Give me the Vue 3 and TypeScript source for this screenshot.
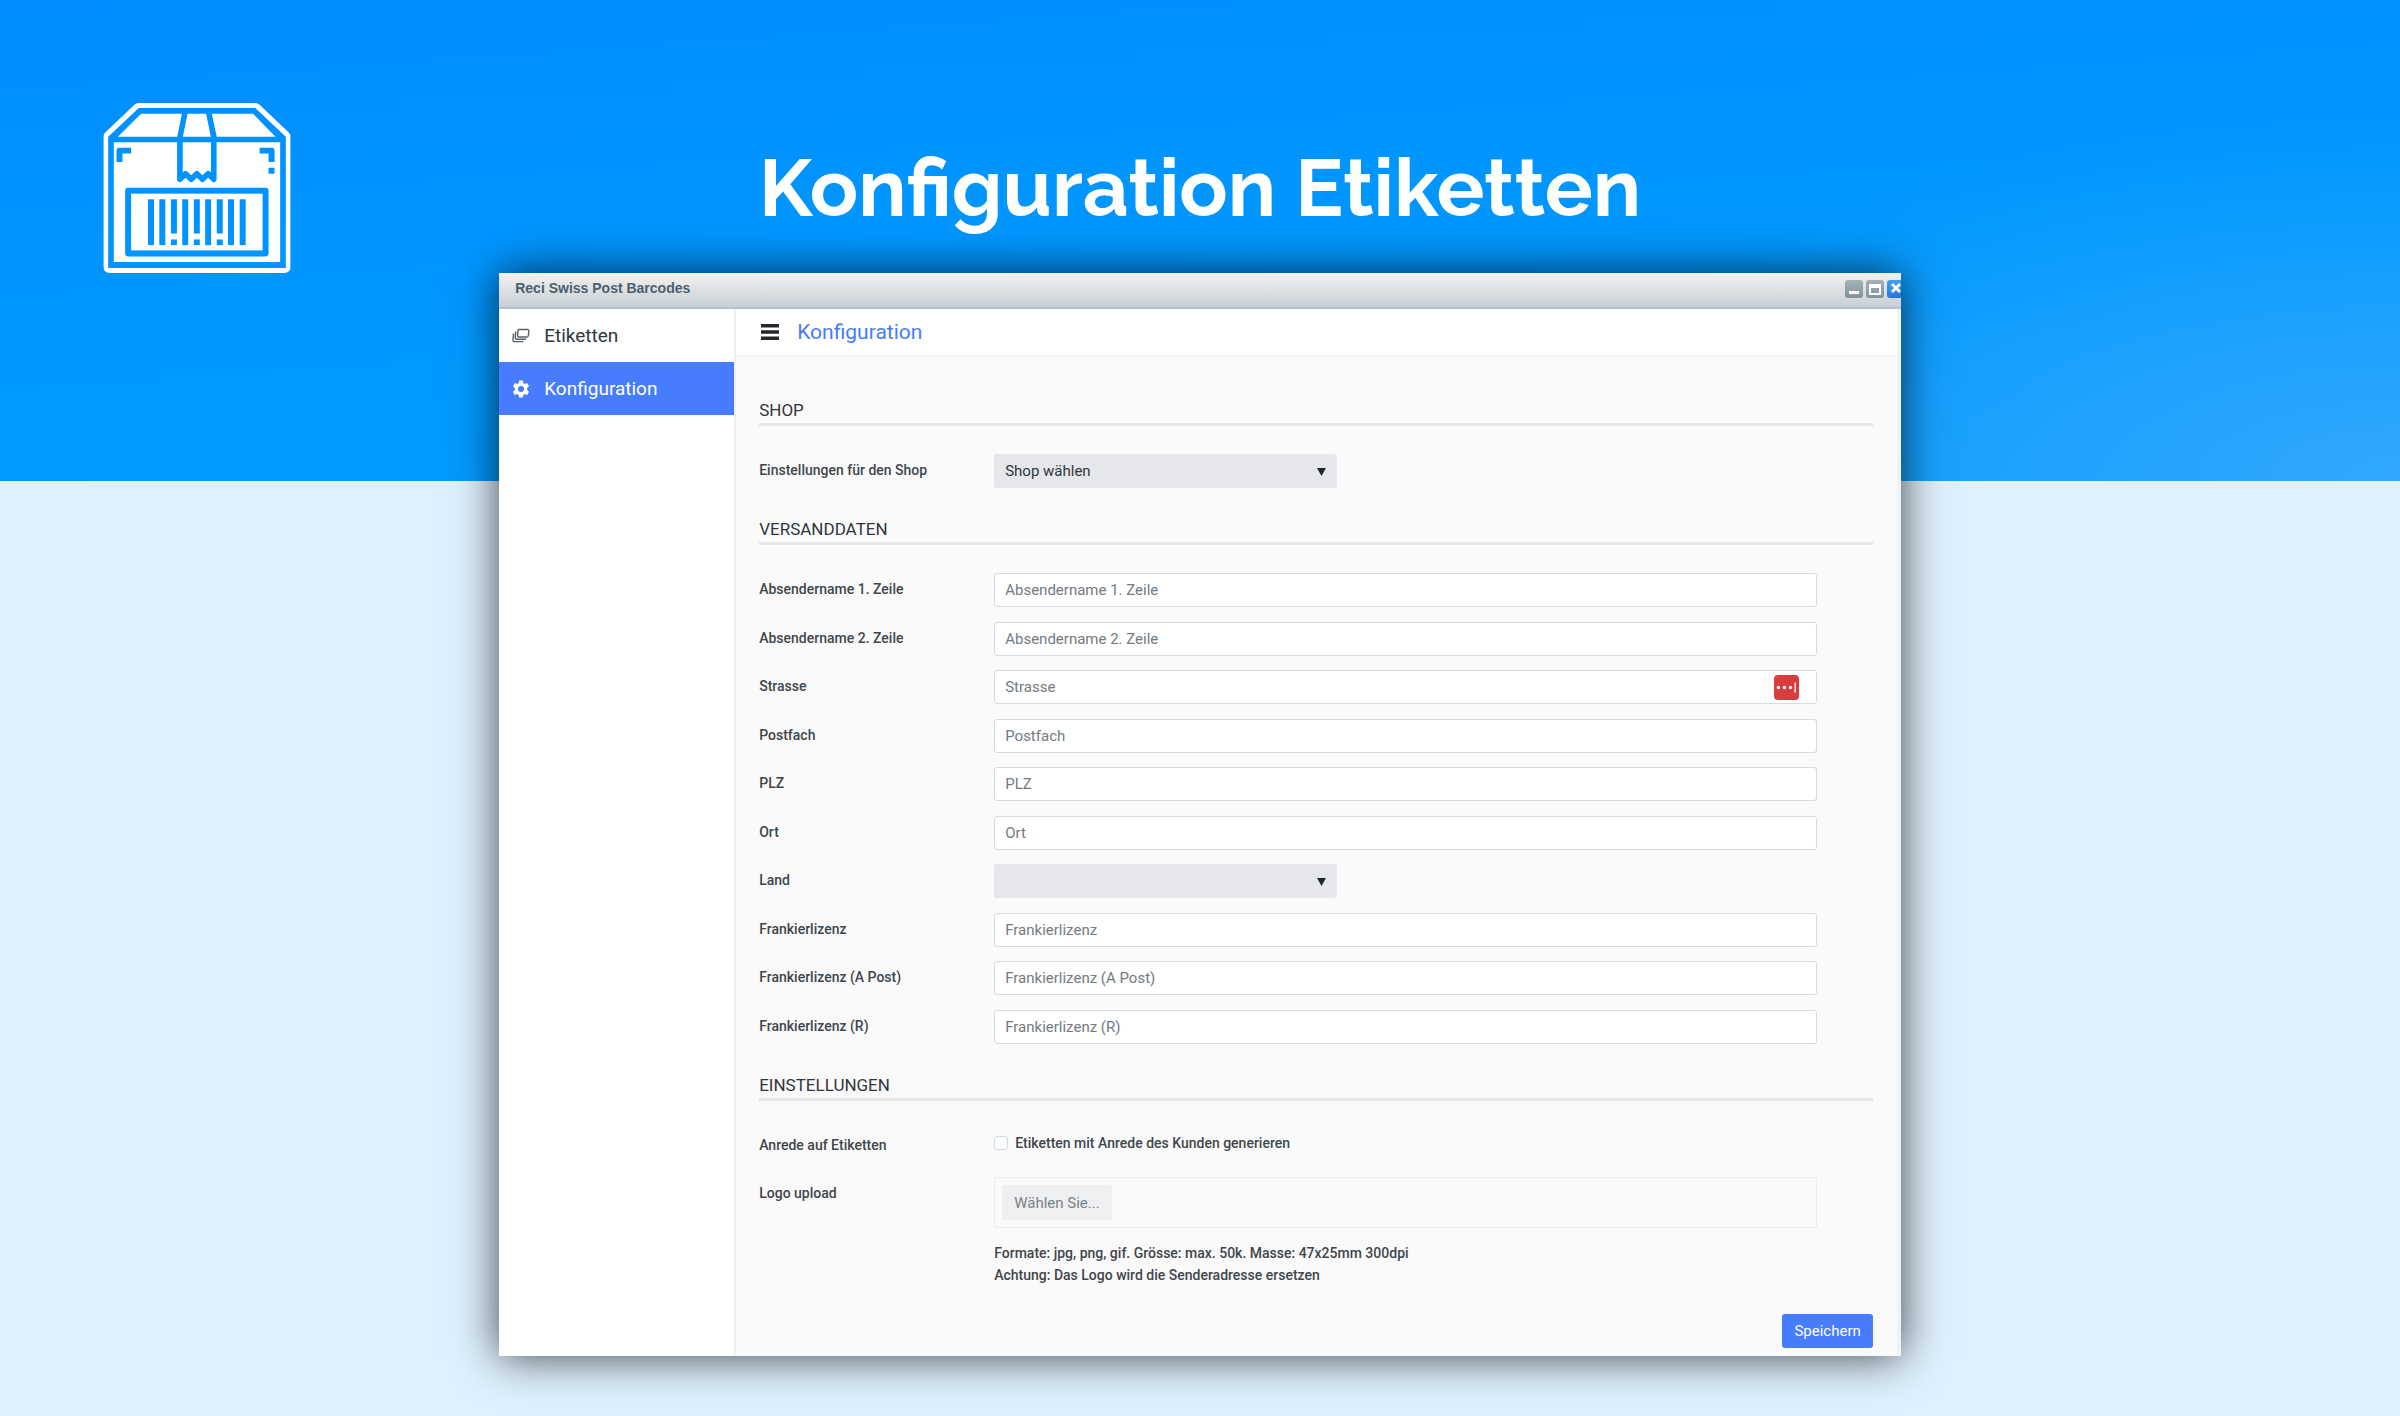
<script setup lang="ts">
import { ref } from 'vue'

interface Field {
  id: string
  label: string
  kind: 'text' | 'select'
  filler?: boolean
}

const shippingFields: Field[] = [
  { id: 'sender1', label: 'Absendername 1. Zeile', kind: 'text' },
  { id: 'sender2', label: 'Absendername 2. Zeile', kind: 'text' },
  { id: 'street', label: 'Strasse', kind: 'text', filler: true },
  { id: 'pobox', label: 'Postfach', kind: 'text' },
  { id: 'zip', label: 'PLZ', kind: 'text' },
  { id: 'city', label: 'Ort', kind: 'text' },
  { id: 'country', label: 'Land', kind: 'select' },
  { id: 'license', label: 'Frankierlizenz', kind: 'text' },
  { id: 'licenseA', label: 'Frankierlizenz (A Post)', kind: 'text' },
  { id: 'licenseR', label: 'Frankierlizenz (R)', kind: 'text' },
]

const values = ref<Record<string, string>>({})
const salutation = ref(false)

const bars = [204, 238, 273, 307, 342, 376, 411, 445, 480].map((x, i) => ({
  x,
  dotted: i === 2 || i === 4 || i === 6,
}))
</script>

<template>
  <div class="page">
    <header class="hero">
      <svg class="box" viewBox="69 69 565 512" aria-hidden="true">
        <mask id="box-cut" maskUnits="userSpaceOnUse" x="69" y="69" width="565" height="512">
          <path fill="#fff" d="M176 69H528Q535 69 540 74L628 158Q634 164 634 172V560Q634 581 613 581H90Q69 581 69 560V172Q69 164 75 158L163 74Q168 69 176 69Z" />
          <path fill="#000" d="M176 84H527L619 171V566H84V171Z" />
          <g fill="#fff">
            <path d="M183 101H306L292 171H113Z" />
            <path d="M323 101H379L393 171H309Z" />
            <path d="M396 101H520L588 171H411Z" />
            <path d="M101 187H602V548H101Z" />
          </g>
          <path fill="none" stroke="#000" stroke-width="17" stroke-linecap="round" stroke-linejoin="round" d="M300 180V299L317 282L334 299L351 282L368 299L385 282L402 299V180" />
          <g fill="#000">
            <path d="M109 247V212Q109 204 117 204H153V221H127V247Z" />
            <path d="M540 204H577Q585 204 585 212V247H567V221H540Z" />
            <rect x="567" y="264" width="18" height="18" />
            <rect x="135" y="324" width="432" height="207" rx="9" />
          </g>
          <rect x="153" y="342" width="396" height="171" fill="#fff" />
          <g fill="#000">
            <template v-for="bar in bars" :key="bar.x">
              <rect :x="bar.x" y="359" width="18" :height="bar.dotted ? 103 : 138" />
              <rect v-if="bar.dotted" :x="bar.x" y="480" width="18" height="17" />
            </template>
          </g>
        </mask>
        <rect x="69" y="69" width="565" height="512" fill="#fff" mask="url(#box-cut)" />
      </svg>
      <h1>Konfiguration Etiketten</h1>
    </header>

    <main class="window">
      <div class="titlebar">
        <span class="caption">Reci Swiss Post Barcodes</span>
        <div class="controls">
          <button type="button" aria-label="Minimieren">
            <svg viewBox="0 0 18 18"><rect x="4" y="11" width="10" height="3" fill="#fff" /></svg>
          </button>
          <button type="button" aria-label="Maximieren">
            <svg viewBox="0 0 18 18"><path fill="#fff" fill-rule="evenodd" d="M3 4H15V15H3ZM5 8V13H13V8Z" /></svg>
          </button>
          <button type="button" class="close" aria-label="Schliessen">
            <svg viewBox="0 0 18 18"><path stroke="#fff" stroke-width="3" d="M5 4L13 12M13 4L5 12" /></svg>
          </button>
        </div>
      </div>

      <div class="body">
        <nav class="sidebar">
          <a href="#etiketten">
            <svg viewBox="0 0 18 18" fill="none" stroke="#5a5f65" stroke-width="1.4" stroke-linejoin="round" aria-hidden="true">
              <path d="M7 2.5H15.5Q17 2.5 16.800 4L16.400 8.500Q16.200 10 14.700 10H7Q5.500 10 5.600 8.500L5.900 4Q6 2.500 7 2.500Z" />
              <path d="M3.700 4.500L3.300 10.500Q3.200 12.300 5 12.300H14" />
              <path d="M1.500 6.500L1 12.800Q.9 14.600 2.700 14.600H11.500" />
            </svg>
            Etiketten
          </a>
          <a href="#konfiguration" class="active" aria-current="page">
            <svg viewBox="0 0 18 18" aria-hidden="true">
              <path fill="#fff" fill-rule="evenodd" d="M7.200.5H10.800L11.300 3L12.800 3.900L15.200 3.100L17 6.200L15.100 7.900V10.100L17 11.800L15.200 14.900L12.800 14.100L11.300 15L10.800 17.500H7.200L6.700 15L5.200 14.100L2.800 14.900L1 11.800L2.900 10.100V7.900L1 6.200L2.800 3.100L5.200 3.900L6.700 3ZM9 6A3 3 0 1 0 9 12A3 3 0 1 0 9 6Z" />
            </svg>
            Konfiguration
          </a>
        </nav>

        <div class="main">
          <div class="topbar">
            <button type="button" class="burger" aria-label="Menü">
              <svg viewBox="0 0 18 18"><path fill="#23272c" d="M0 1H18V4.500H0ZM0 7.200H18V10.700H0ZM0 13.400H18V16.900H0Z" /></svg>
            </button>
            <h2>Konfiguration</h2>
          </div>

          <form class="content" @submit.prevent>
            <section>
              <h3>SHOP</h3>
              <div class="row">
                <label for="shop">Einstellungen für den Shop</label>
                <div class="select">
                  <select id="shop"><option>Shop wählen</option></select>
                  <svg viewBox="0 0 9 8" aria-hidden="true"><path d="M0 0H9L4.500 8Z" /></svg>
                </div>
              </div>
            </section>

            <section>
              <h3>VERSANDDATEN</h3>
              <div class="rows">
                <div v-for="field in shippingFields" :key="field.id" class="row">
                  <label :for="field.id">{{ field.label }}</label>
                  <div v-if="field.kind === 'select'" class="select">
                    <select :id="field.id" v-model="values[field.id]"><option value=""></option></select>
                    <svg viewBox="0 0 9 8" aria-hidden="true"><path d="M0 0H9L4.500 8Z" /></svg>
                  </div>
                  <div v-else class="text">
                    <input :id="field.id" v-model="values[field.id]" type="text" :placeholder="field.label" />
                    <svg v-if="field.filler" class="filler" viewBox="0 0 25 25" aria-hidden="true">
                      <rect width="25" height="25" rx="4" fill="#d83c3c" />
                      <g fill="#fff">
                        <circle cx="4.500" cy="12.500" r="1.700" />
                        <circle cx="10.500" cy="12.500" r="1.700" />
                        <circle cx="16.500" cy="12.500" r="1.700" />
                        <rect x="20.500" y="7.500" width="1.300" height="10" />
                      </g>
                    </svg>
                  </div>
                </div>
              </div>
            </section>

            <section>
              <h3>EINSTELLUNGEN</h3>
              <div class="row salutation">
                <label for="salutation">Anrede auf Etiketten</label>
                <label class="check">
                  <input id="salutation" v-model="salutation" type="checkbox" />
                  Etiketten mit Anrede des Kunden generieren
                </label>
              </div>
              <div class="row">
                <label for="logo">Logo upload</label>
                <div>
                  <div class="upload">
                    <button id="logo" type="button">Wählen Sie...</button>
                  </div>
                  <p class="hint">
                    Formate: jpg, png, gif. Grösse: max. 50k. Masse: 47x25mm 300dpi<br />
                    Achtung: Das Logo wird die Senderadresse ersetzen
                  </p>
                </div>
              </div>
            </section>

            <button type="submit" class="save">Speichern</button>
          </form>
        </div>
      </div>
    </main>
  </div>
</template>

<style>
body {
  margin: 0;
}
</style>

<style scoped>
* {
  box-sizing: border-box;
}

.page {
  min-height: 100vh;
  padding-bottom: 60px;
  background:
    radial-gradient(ellipse 36% 75% at 100% 100%, rgba(64, 172, 252, 0.75), rgba(64, 172, 252, 0)) 0 0 / 100% 34% no-repeat,
    linear-gradient(176deg, #008cff, #0099ff 60%, #069cff) 0 0 / 100% 34% no-repeat,
    #dff1fe;
  font-family: Roboto, 'Liberation Sans', sans-serif;
  color: #30363c;
}

.hero {
  display: grid;
  grid-template-columns: 188px 1fr 188px;
  padding: 103px 103px 0;
}

.box {
  display: block;
  width: 188px;
  height: 170px;
}

h1 {
  margin: 37px 0 0;
  font: 700 80px/96px Raleway, Lato, sans-serif;
  color: #fff;
  text-align: center;
}

.window {
  width: 58.4%;
  margin: 0 auto;
  background: #fafafa;
  box-shadow: 0 0 42px rgba(0, 0, 0, 0.72);
}

.titlebar {
  display: flex;
  align-items: flex-start;
  justify-content: space-between;
  height: 36px;
  padding-left: 16px;
  overflow: hidden;
  background: linear-gradient(#f1f1f2, #c8d0d5);
  border-bottom: 2px solid #b3c1cd;
}

.caption {
  font: bold 14px/30px 'Liberation Sans', Arial, sans-serif;
  color: #4c5f6c;
}

.controls {
  display: flex;
  gap: 3px;
  margin: 7px -4px 0 0;
}

.controls button {
  width: 18px;
  height: 18px;
  padding: 0;
  border: 0;
  border-radius: 3px;
  background: linear-gradient(#a3b2ba, #82929c);
}

.controls .close {
  background: linear-gradient(#3ea2f5, #2a74d4);
}

.controls svg {
  display: block;
}

.body {
  display: flex;
  border-right: 4px solid #f1f2f3;
}

.sidebar {
  flex: none;
  width: 237px;
  background: #fff;
  border-right: 2px solid #f0f0f1;
}

.sidebar a {
  display: flex;
  align-items: center;
  gap: 14px;
  height: 53px;
  padding-left: 13px;
  font-size: 19px;
  color: #30363c;
  text-decoration: none;
}

.sidebar a.active {
  background: #477cff;
  color: #fff;
}

.sidebar svg {
  width: 18px;
  height: 18px;
}

.main {
  flex: 1;
  min-width: 0;
}

.topbar {
  display: flex;
  align-items: center;
  gap: 18px;
  height: 48px;
  padding-left: 25px;
  background: #fff;
  border-bottom: 2px solid #f6f6f7;
}

.burger {
  width: 18px;
  height: 18px;
  padding: 0;
  border: 0;
  background: none;
}

.burger svg {
  display: block;
}

h2 {
  margin: 0;
  font-size: 21px;
  font-weight: 400;
  line-height: 26px;
  color: #477cff;
}

.content {
  display: flex;
  flex-direction: column;
  gap: 28px;
  padding: 40px 24px 8px 23px;
}

h3 {
  margin: 0 0 28px;
  font-size: 17px;
  font-weight: 400;
  line-height: 26px;
  border-bottom: 3px solid #e5e8eb;
}

.rows {
  display: flex;
  flex-direction: column;
  justify-content: space-between;
  min-height: 471px;
}

.row {
  display: grid;
  grid-template-columns: 235px 1fr;
  padding-right: 56px;
}

.row label {
  font-size: 14px;
  font-weight: 500;
  line-height: 32px;
  color: #40464c;
}

.select {
  position: relative;
  width: 343px;
}

.select svg {
  position: absolute;
  top: 14px;
  right: 11px;
  width: 9px;
  height: 8px;
  fill: #23272c;
  pointer-events: none;
}

select,
.text input {
  display: block;
  width: 100%;
  height: 34px;
  padding: 0 11px;
  border-radius: 3px;
  font: 15px Roboto, 'Liberation Sans', sans-serif;
  color: #30363c;
}

select {
  appearance: none;
  border: 0;
  background: #e5e7eb;
}

.text {
  position: relative;
}

.text input {
  padding: 0 10px;
  border: 1px solid #d5dbe1;
  background: #fff;
}

.text input::placeholder {
  color: #737a81;
  opacity: 1;
}

.filler {
  position: absolute;
  top: 5px;
  right: 18px;
  width: 25px;
  height: 25px;
}

.salutation {
  min-height: 34px;
  margin-bottom: 14px;
}

.row .check {
  display: flex;
  align-items: center;
  gap: 7px;
  height: 28px;
}

.check input {
  appearance: none;
  width: 14px;
  height: 14px;
  margin: 0;
  border: 1px solid #d0dae4;
  border-radius: 3px;
  background: #fff;
}

.upload {
  padding: 7px;
  border: 1px solid #eceeef;
}

.upload button {
  display: block;
  height: 35px;
  padding: 0 12px;
  border: 0;
  border-radius: 3px;
  background: #eeeff1;
  font: 15px Roboto, 'Liberation Sans', sans-serif;
  color: #7d8084;
}

.hint {
  margin: 14px 0 0;
  font-size: 14px;
  font-weight: 500;
  line-height: 22px;
  color: #40464c;
}

.save {
  align-self: flex-end;
  height: 34px;
  padding: 0 12px;
  border: 0;
  border-radius: 3px;
  background: #477cff;
  font: 15px Roboto, 'Liberation Sans', sans-serif;
  color: #fff;
}
</style>
